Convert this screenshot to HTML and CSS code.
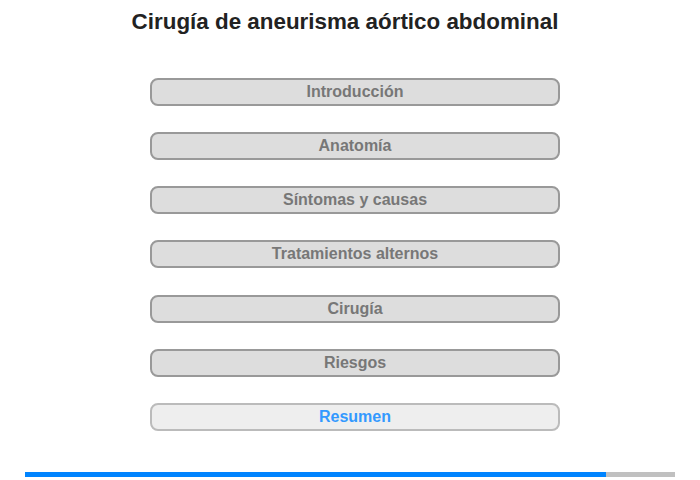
FILE: index.html
```html
<!DOCTYPE html>
<html lang="es">
<head>
<meta charset="utf-8">
<title>Cirugía de aneurisma aórtico abdominal</title>
<link rel="stylesheet" href="styles.css">
</head>
<body>
<div class="page">
  <h1 class="title">Cirugía de aneurisma aórtico abdominal</h1>
  <nav class="menu">
    <div class="item">Introducción</div>
    <div class="item">Anatomía</div>
    <div class="item">Síntomas y causas</div>
    <div class="item">Tratamientos alternos</div>
    <div class="item">Cirugía</div>
    <div class="item">Riesgos</div>
    <div class="item current">Resumen</div>
  </nav>
  <div class="progress"><div class="fill" style="width: 89.4%"></div></div>
</div>
</body>
</html>
```
FILE: styles.css
```css
html, body {
  margin: 0;
  padding: 0;
  background: #fff;
}
body {
  font-family: "Liberation Sans", Arial, sans-serif;
}
.page {
  width: 700px;
  height: 480px;
  display: flex;
  flex-direction: column;
}
.title {
  margin: 9px 0 0 0;
  font-size: 22.4px;
  font-weight: bold;
  color: #222;
  text-align: center;
  padding-right: 10px;
  line-height: 26px;
}
.menu {
  margin: 43px 0 0 150px;
  width: 410px;
  display: flex;
  flex-direction: column;
  gap: 26.17px;
}
.item {
  box-sizing: border-box;
  height: 28px;
  border: 2px solid #999;
  border-radius: 8px;
  background: #ddd;
  color: #777;
  font-weight: bold;
  font-size: 16px;
  line-height: 24px;
  text-align: center;
}
.item.current {
  background: #eee;
  border-color: #bbb;
  color: #3399ff;
}
.progress {
  margin: 41px 0 0 25px;
  width: 650px;
  height: 5px;
  background: #c0c0c0;
}
.fill {
  height: 100%;
  background: #0084ff;
}
```
